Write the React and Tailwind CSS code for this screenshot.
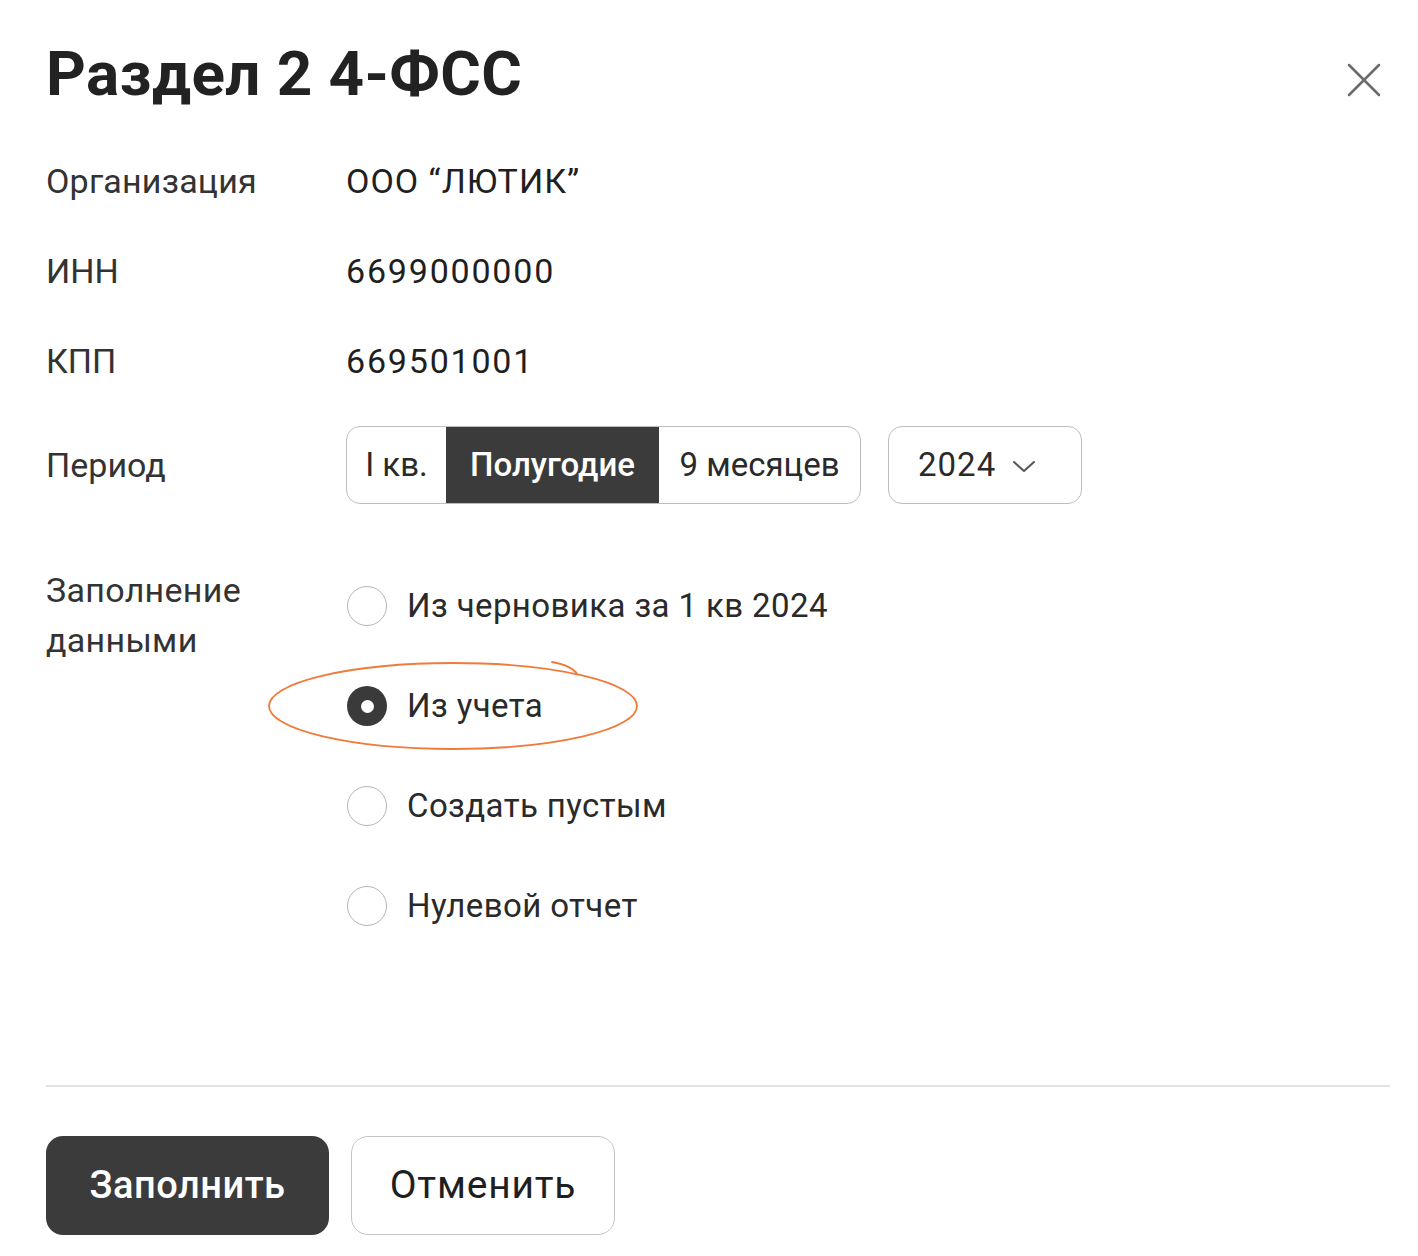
import React from "react";

const font = { fontFamily: "Roboto, 'Noto Sans', sans-serif" };

function Radio({ checked, label }) {
  return (
    <div className="flex items-center h-[40px]">
      {checked ? (
        <div className="w-[40px] h-[40px] rounded-full bg-[#3a3a3a] flex items-center justify-center">
          <div className="w-[13px] h-[13px] rounded-full bg-white" />
        </div>
      ) : (
        <div className="w-[40px] h-[40px] rounded-full border-[1.5px] border-[#b5b5b5] bg-white" />
      )}
      <span className="ml-[20px] text-[33px] text-[#2a2a2a] tracking-[0.4px]">{label}</span>
    </div>
  );
}

export default function App() {
  return (
    <div className="w-[1418px] h-[1256px] bg-white relative text-[#262626]" style={font}>
      <div className="pl-[46px] pr-[28px] pt-[38px]">
        <div className="flex items-start justify-between">
          <h1 className="text-[62px] font-bold leading-[72px] tracking-[0.4px] text-[#222]">Раздел 2 4-ФСС</h1>
          <svg width="36" height="36" viewBox="0 0 36 36" className="mt-[24px] mr-[8px]">
            <path d="M3 3 L33 33 M33 3 L3 33" stroke="#6b6b6b" strokeWidth="2.5" strokeLinecap="round" />
          </svg>
        </div>

        <div className="mt-[51px] grid grid-cols-[300px_1fr] text-[34px] leading-[40px]">
          <div className="h-[40px] text-[#333] tracking-[0.2px]">Организация</div>
          <div className="h-[40px] text-[#1f1f1f] tracking-[1px]">ООО “ЛЮТИК”</div>

          <div className="mt-[50px] h-[40px] text-[#333]">ИНН</div>
          <div className="mt-[50px] h-[40px] text-[#1f1f1f] tracking-[1.8px]">6699000000</div>

          <div className="mt-[50px] h-[40px] text-[#333]">КПП</div>
          <div className="mt-[50px] h-[40px] text-[#1f1f1f] tracking-[1.8px]">669501001</div>

          <div className="mt-[45px] flex items-center h-[78px] text-[#333]">Период</div>
          <div className="mt-[45px] flex items-center gap-[27px] text-[33px]">
            <div className="flex h-[78px] rounded-[14px] border-[1.5px] border-[#bdbdbd] overflow-hidden">
              <div className="w-[99px] flex items-center justify-center text-[#2a2a2a]">I кв.</div>
              <div className="w-[213px] flex items-center justify-center bg-[#3b3b3b] text-white font-medium">Полугодие</div>
              <div className="w-[201px] flex items-center justify-center text-[#2a2a2a]">9 месяцев</div>
            </div>
            <div className="w-[194px] h-[78px] rounded-[14px] border-[1.5px] border-[#bdbdbd] flex items-center pl-[29px] text-[#2a2a2a] tracking-[1px]">
              2024
              <svg width="24" height="14" viewBox="0 0 24 14" className="ml-[16px] mt-[4px]">
                <path d="M2 2 L12 11 L22 2" fill="none" stroke="#555" strokeWidth="2" strokeLinecap="round" strokeLinejoin="round" />
              </svg>
            </div>
          </div>

          <div className="mt-[61px] text-[#333] leading-[50px] tracking-[0.3px]">
            Заполнение
            <br />
            данными
          </div>
          <div className="mt-[82px] flex flex-col gap-[60px] pl-[1px] relative">
            <Radio label="Из черновика за 1 кв 2024" />
            <div className="relative">
              <svg
                width="380"
                height="100"
                viewBox="0 0 380 100"
                className="absolute left-[-79px] top-[-25px] pointer-events-none"
              >
                <ellipse cx="185" cy="45" rx="184" ry="43" fill="none" stroke="#f07a3a" strokeWidth="1.8" />
                <path d="M284 1 C300 4 306 8 309 13" fill="none" stroke="#f07a3a" strokeWidth="1.8" strokeLinecap="round" />
              </svg>
              <Radio checked label="Из учета" />
            </div>
            <Radio label="Создать пустым" />
            <Radio label="Нулевой отчет" />
          </div>
        </div>
      </div>

      <div className="absolute left-0 right-0 top-[1085px] px-[46px] pr-[28px]">
        <div className="h-[2px] bg-[#e2e2e2]" />
        <div className="mt-[49px] flex gap-[22px]">
          <button className="w-[283px] h-[99px] rounded-[17px] bg-[#3b3b3b] text-white text-[38px] font-medium tracking-[0.5px]">
            Заполнить
          </button>
          <button className="w-[264px] h-[99px] rounded-[17px] border-[1.5px] border-[#c4c4c4] bg-white text-[#1f1f1f] text-[39px] tracking-[0.8px]">
            Отменить
          </button>
        </div>
      </div>
    </div>
  );
}
